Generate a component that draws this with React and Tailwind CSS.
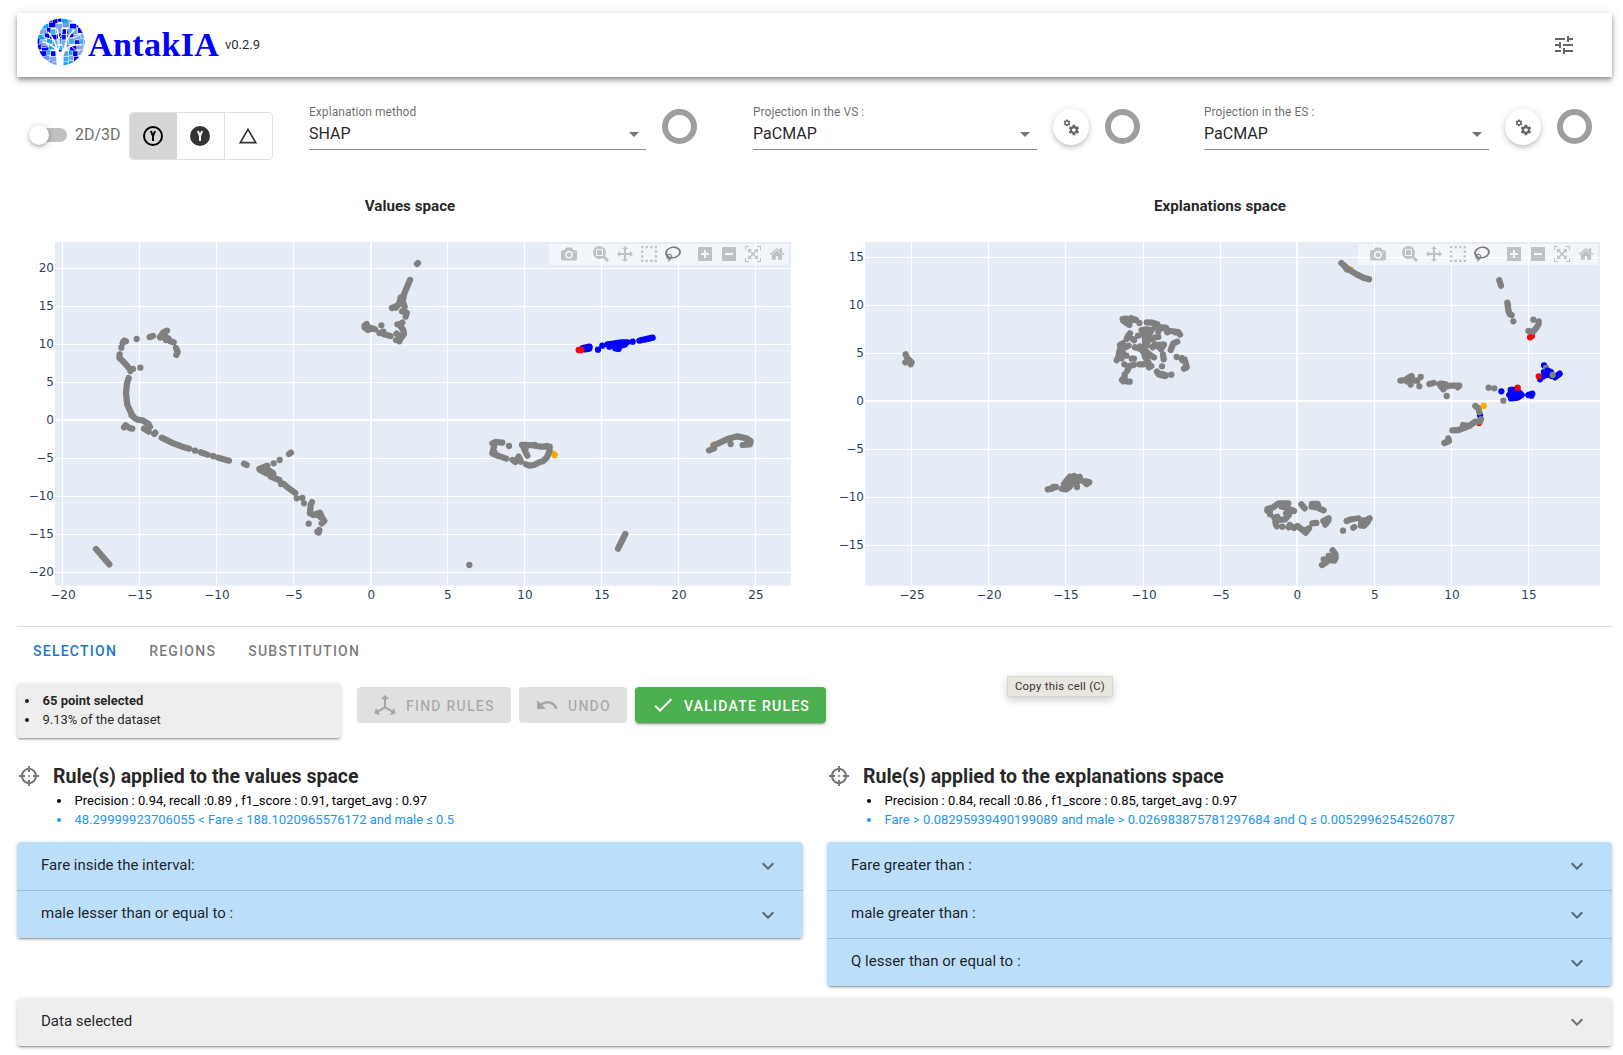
import React from "react";

const MDI = {
  tune: "M3,17V19H9V17H3M3,5V7H13V5H3M13,21V19H21V17H13V15H11V21H13M7,9V11H3V13H7V15H9V9H7M21,13V11H11V13H21M15,9H17V7H21V5H17V3H15V9Z",
  triangle: "M12,2L1,21H23M12,6L19.53,19H4.47",
  menuDown: "M7,10L12,15L17,10H7Z",
  chevron: "M7.41,8.58L12,13.17L16.59,8.58L18,10L12,16L6,10L7.41,8.58Z",
  check: "M21,7L9,19L3.5,13.5L4.91,12.09L9,16.17L19.59,5.59L21,7Z",
  undo: "M12.5,8C9.85,8 7.45,9 5.6,10.6L2,7V16H11L7.38,12.38C8.77,11.22 10.54,10.5 12.5,10.5C16.04,10.5 19.08,12.81 20.14,16L22.5,15.22C21.11,11.03 17.15,8 12.5,8Z",
  axis: "M12,2L16,6H13V13.85L19.53,17.61L21,15.03L22.5,20.5L17,21.96L18.53,19.35L12,15.58L5.47,19.35L7,21.96L1.5,20.5L3,15.03L4.47,17.61L11,13.85V6H8L12,2Z",
  target:
    "M11,2V4.07C7.38,4.53 4.53,7.38 4.07,11H2V13H4.07C4.53,16.62 7.38,19.47 11,19.93V22H13V19.93C16.62,19.47 19.47,16.62 19.93,13H22V11H19.93C19.47,7.38 16.62,4.53 13,4.07V2M11,6.08V8H13V6.09C15.5,6.5 17.5,8.5 17.92,11H16V13H17.91C17.5,15.5 15.5,17.5 13,17.92V16H11V17.91C8.5,17.5 6.5,15.5 6.08,13H8V11H6.09C6.5,8.5 8.5,6.5 11,6.08M12,11A1,1 0 0,0 11,12A1,1 0 0,0 12,13A1,1 0 0,0 13,12A1,1 0 0,0 12,11Z",
  cogs: "M15.9,18.45C17.25,18.45 18.35,17.35 18.35,16C18.35,14.65 17.25,13.55 15.9,13.55C14.54,13.55 13.45,14.65 13.45,16C13.45,17.35 14.54,18.45 15.9,18.45M21.1,16.68L22.58,17.84C22.71,17.95 22.75,18.13 22.66,18.29L21.26,20.71C21.17,20.86 21,20.92 20.83,20.86L19.09,20.16C18.73,20.44 18.33,20.67 17.91,20.85L17.64,22.7C17.62,22.87 17.47,23 17.3,23H14.5C14.32,23 14.18,22.87 14.15,22.7L13.89,20.85C13.46,20.67 13.07,20.44 12.71,20.16L10.96,20.86C10.81,20.92 10.62,20.86 10.54,20.71L9.14,18.29C9.05,18.13 9.09,17.95 9.22,17.84L10.7,16.68L10.65,16L10.7,15.31L9.22,14.16C9.09,14.05 9.05,13.86 9.14,13.71L10.54,11.29C10.62,11.13 10.81,11.07 10.96,11.13L12.71,11.84C13.07,11.56 13.46,11.32 13.89,11.15L14.15,9.29C14.18,9.13 14.32,9 14.5,9H17.3C17.47,9 17.62,9.13 17.64,9.29L17.91,11.15C18.33,11.32 18.73,11.56 19.09,11.84L20.83,11.13C21,11.07 21.17,11.13 21.26,11.29L22.66,13.71C22.75,13.86 22.71,14.05 22.58,14.16L21.1,15.31L21.15,16L21.1,16.68M6.69,8.07C7.56,8.07 8.26,7.37 8.26,6.5C8.26,5.63 7.56,4.92 6.69,4.92C5.82,4.92 5.13,5.63 5.13,6.5C5.13,7.37 5.82,8.07 6.69,8.07M10.03,6.94L11,7.68C11.07,7.75 11.09,7.87 11.03,7.97L10.13,9.53C10.08,9.63 9.96,9.67 9.86,9.63L8.74,9.18L8,9.62L7.81,10.81C7.79,10.92 7.7,11 7.59,11H5.79C5.67,11 5.58,10.92 5.56,10.81L5.4,9.62L4.64,9.18L3.52,9.63C3.41,9.67 3.3,9.63 3.24,9.53L2.34,7.97C2.28,7.87 2.31,7.75 2.39,7.68L3.34,6.94L3.31,6.5L3.34,6.06L2.39,5.32C2.31,5.25 2.28,5.13 2.34,5.03L3.24,3.47C3.3,3.37 3.41,3.33 3.52,3.37L4.63,3.82L5.4,3.38L5.56,2.19C5.58,2.08 5.67,2 5.79,2H7.59C7.7,2 7.79,2.08 7.81,2.19L8,3.38L8.74,3.82L9.86,3.37C9.96,3.33 10.08,3.37 10.13,3.47L11.03,5.03C11.09,5.13 11.07,5.25 11,5.32L10.03,6.06L10.06,6.5L10.03,6.94Z",
};

// Toolbar glyphs: [width of the glyph box, path]; y axis points up.
const TOOLS = [
  [
    [1000, "m500 450c-83 0-150-67-150-150 0-83 67-150 150-150 83 0 150 67 150 150 0 83-67 150-150 150z m400 150h-120c-16 0-34 13-39 29l-31 93c-6 15-23 28-40 28h-340c-16 0-34-13-39-28l-31-94c-6-15-23-28-40-28h-120c-55 0-100-45-100-100v-450c0-55 45-100 100-100h800c55 0 100 45 100 100v450c0 55-45 100-100 100z m-400-550c-138 0-250 112-250 250 0 138 112 250 250 250 138 0 250-112 250-250 0-138-112-250-250-250z m365 380c-19 0-35 16-35 35 0 19 16 35 35 35 19 0 35-16 35-35 0-19-16-35-35-35z"],
  ],
  [
    [1000, "m1000-25l-250 251c40 63 63 138 63 218 0 224-182 406-407 406-224 0-406-182-406-406s183-406 407-406c80 0 155 22 218 62l250-250 125 125z m-812 250l0 438 437 0 0-438-437 0z m62 375l313 0 0-312-313 0 0 312z"],
    [1000, "m1000 350l-187 188 0-125-250 0 0 250 125 0-188 187-187-187 125 0 0-250-250 0 0 125-188-188 186-187 0 125 252 0 0-250-125 0 187-188 188 188-125 0 0 250 250 0 0-126 187 188z"],
    [1000, "m0 850l0-143 143 0 0 143-143 0z m286 0l0-143 143 0 0 143-143 0z m285 0l0-143 143 0 0 143-143 0z m286 0l0-143 143 0 0 143-143 0z m-857-286l0-143 143 0 0 143-143 0z m857 0l0-143 143 0 0 143-143 0z m-857-285l0-143 143 0 0 143-143 0z m857 0l0-143 143 0 0 143-143 0z m-857-286l0-143 143 0 0 143-143 0z m286 0l0-143 143 0 0 143-143 0z m285 0l0-143 143 0 0 143-143 0z m286 0l0-143 143 0 0 143-143 0z"],
    [1031, "m1018 538c-36 207-290 336-568 286-277-48-473-256-436-463 10-57 36-108 76-151-13-66 11-137 68-183 34-28 75-41 114-42l-55-70 0 0c-2-1-3-2-4-3-10-14-8-34 5-45 14-11 34-8 45 4 1 1 2 3 2 5l0 0 113 140c16 11 31 24 45 40 4 3 6 7 8 11 48-3 100 0 151 9 278 48 473 255 436 462z m-624-379c-80 14-149 48-197 96 42 42 109 47 156 9 33-26 47-66 41-105z m-187-74c-19 16-33 37-39 60 50-32 109-55 174-68-42-25-95-24-135 8z m360 75c-34-7-69-9-102-8 8 62-16 128-68 170-73 59-175 54-244-5-9 20-16 40-20 61-28 159 121 317 333 354s407-60 434-217c28-159-121-318-333-355z", true],
  ],
  [
    [875, "m1 787l0-875 875 0 0 875-875 0z m687-500l-187 0 0-187-125 0 0 187-188 0 0 125 188 0 0 187 125 0 0-187 187 0 0-125z"],
    [875, "m0 788l0-876 876 0 0 876-876 0z m688-500l-500 0 0 125 500 0 0-125z"],
    [1000, "m250 850l-187 0-63 0 0-62 0-188 63 0 0 188 187 0 0 62z m688 0l-188 0 0-62 188 0 0-188 62 0 0 188 0 62-62 0z m-875-938l0 188-63 0 0-188 0-62 63 0 187 0 0 62-187 0z m875 188l0-188-188 0 0-62 188 0 62 0 0 62 0 188-62 0z m-125 188l-1 0-93-94-156 156 156 156 92-93 2 0 0 250-250 0 0-2 93-92-156-156-156 156 94 92 0 2-250 0 0-250 0 0 93 93 157-156-157-156-93 94 0 0 0-250 250 0 0 0-94 93 156 157 156-157-93-93 0 0 250 0 0 250z"],
    [928.6, "m786 296v-267q0-15-11-26t-25-10h-214v214h-143v-214h-214q-15 0-25 10t-11 26v267q0 1 0 2t0 2l321 264 321-264q1-1 1-4z m124 39l-34-41q-5-5-12-6h-2q-7 0-12 3l-386 322-386-322q-7-4-13-4-7 2-12 7l-35 41q-4 5-3 13t6 12l401 334q18 15 42 15t43-15l136-114v109q0 8 5 13t13 5h107q8 0 13-5t5-13v-227l122-102q5-5 6-12t-4-13z"],
  ],
];

function Icon({ name, className = "size-6" }) {
  return (
    <svg viewBox="0 0 24 24" className={`shrink-0 ${className}`} fill="currentColor">
      <path d={MDI[name]} />
    </svg>
  );
}

function Modebar({ className }) {
  return (
    <div className={`absolute flex h-[21px] bg-white/50 ${className}`}>
      {TOOLS.map((group, g) => (
        <div key={g} className="flex pl-2">
          {group.map(([w, d, active], i) => (
            <div key={i} className="flex h-5 w-6 items-center justify-center">
              <svg
                viewBox={`0 0 ${w} 1000`}
                className={active ? "h-4 w-4 fill-[#444]/70" : "h-4 w-4 fill-[#444]/30"}
              >
                <path transform="matrix(1 0 0 -1 0 850)" d={d} />
              </svg>
            </div>
          ))}
        </div>
      ))}
    </div>
  );
}

// Each layer holds chains of neighbouring points, separated by ";".
const VALUES_LAYERS = [
  {
    origin: [0, 180],
    color: "gray",
    points:
      "370,485 378,484;368,490 373,482;364,503;410,477;449,471 459,468;480,472 490,457 501,452;487,462 496,468;480,470 505,475 510,484 521,487;498,480;528,504 533,516 529,525;359,523 358,533 372,547 390,568 399,567;391,573;421,563;386,594 381,610 378,640 382,675 394,700 402,713 412,719 427,721 445,731 450,740;394,705;372,742 377,736 388,744 397,746;432,746 446,755;463,762 466,758;485,773 520,790 547,800 568,806;585,812;602,817 622,824;638,828 641,829;655,833 687,842;732,851 740,855;778,867 802,857;821,850;839,840;867,822 873,818;780,870 800,880 820,882 812,890 838,900;785,864 800,868 818,878;800,875 815,890;843,912 850,911 860,920 886,939;890,955;907,954;912,970;936,966 932,975 930,1000 940,1005 960,998 965,1010 973,1023 965,1030;950,1003 962,1012;926,1031;958,1050 956,1058;952,1055;288,1107 328,1153",
  },
  { origin: [340, 180], color: "orange", points: "1122,793;638,820" },
  {
    origin: [340, 180],
    color: "gray",
    points:
      "231,252 234,249;210,300 195,335 185,360 168,383;156,384 170,378;192,345 188,365 194,380;182,352 178,372;186,394 200,398 197,410;200,400 192,392;187,428 180,433 172,433;182,440 190,450 192,462 180,478 168,480;152,468 132,463;118,459;105,448 80,440;74,437 80,432 84,450 74,443;80,440 92,447;124,436;130,455;170,461 182,470;178,484;457,790 468,786 487,788;507,798;462,800 457,820 476,828;464,818;488,832 499,836;518,840 526,846 536,830 543,845;558,853 568,857 582,855 600,846 608,844 620,833 628,815 629,800 605,800 590,798 570,795;584,795;620,798;546,795 558,795 552,805 556,815 562,827;550,800 558,803;1107,811 1122,805;1120,797 1140,788 1165,776 1192,769 1220,775 1232,783 1230,793 1208,795;1222,785;1172,792;856,1062 834,1106;388,1155",
  },
  {
    origin: [340, 180],
    color: "blue",
    points:
      "728,504 749,500 748,506 735,508;774,509;787,497;803,493 820,491 845,487 862,487;808,500;826,505 836,507;838,498 854,494;826,496;878,485;898,482 905,480;912,479 938,473",
  },
  { origin: [340, 180], color: "red", points: "716,510 724,510" },
  { origin: [340, 180], color: "orange", points: "644,825" },
];

const EXPLANATION_LAYERS = [
  { origin: [1220, 180], color: "orange", points: "391,268" },
  { origin: [1220, 180], color: "red", points: "936,467;777,729" },
  { origin: [1220, 180], color: "blue", points: "780,706" },
  {
    origin: [830, 230],
    color: "gray",
    points:
      "227,373 232,385 245,397 242,403;226,397 235,390;878,267 888,266;903,265 918,270;928,279;880,273 898,285;888,270 908,270;950,277 967,278 982,283 975,290;992,292 1008,293 1012,307;1000,294;1022,303 1045,306 1050,314;1036,307;935,300 950,298 965,300 958,312;985,305 988,294;900,310 894,318 890,327;908,327 912,331;924,317;940,310 945,325 945,350;950,310 952,345;965,328 975,322 985,321;870,345 878,340;896,347 885,352 870,356;868,365 865,382 860,391;876,345 878,365 875,385;872,350 870,380;889,377;915,352 935,358 945,375 960,375 972,382;968,352 975,343;985,345 1002,344 993,358;985,350;999,373 1001,388;1022,360 1030,340 1042,335;1040,381;1056,384 1066,395 1070,412 1062,416;1056,390 1064,388;883,403;897,408 912,405;928,403 940,403 955,397 945,380;948,385 955,370;905,386 912,386;957,412 964,408;996,409;981,425 987,434 1005,438;995,432 1008,436;1024,434;895,415 892,422;884,433 884,442 876,450;880,454;890,454 899,455;930,350 950,365;653,778 668,775;670,771 678,771;695,776 708,778 720,770;741,771;702,762 715,745 720,740;705,768 722,755;733,738 730,750 749,740 752,750 735,760 718,762 710,760 722,748;764,757;768,754 778,757 770,762",
  },
  {
    origin: [1220, 180],
    color: "gray",
    points:
      "364,249 385,268 410,283 430,293 447,298;372,256 380,268;838,301 843,317;862,368 865,390 869,403 875,405;864,375;880,424;940,419;956,424 956,432 948,445 938,457 925,453;541,602 555,600 575,588;568,596 570,606 572,614;562,604 580,602 592,602;602,591;598,619;628,612 641,609;658,612 665,622 680,620 678,613 663,611;670,628;693,617 718,617 713,622;680,648;806,623;823,625;850,662;766,678 775,685 778,697;783,718 780,725 765,725 748,738 729,735;740,741 715,750 697,751;729,741;685,775 687,783 673,789;142,992 142,987 160,982 176,970 205,970;150,1003;150,992;163,1013 172,1010 176,1020 195,1018 207,1005 203,990;185,980 200,982 210,988 222,993;198,1000;166,1025 168,1035 171,1039;187,1040;206,1042 209,1035 222,1044;232,1038 245,1048 257,1058 267,1045;258,1050;277,1030 289,1029;244,973 254,985;275,980 276,972 293,972 297,985 311,991;285,982;310,1023 326,1015 325,1022 316,1034;380,1023 392,1018 402,1017;415,1015;369,1052;400,1043 403,1041;423,1037 424,1022 440,1020 449,1015 441,1028 432,1037;338,1111 346,1122 347,1133 343,1142 325,1140;335,1132;326,1128;311,1138;306,1155 318,1148",
  },
  {
    origin: [1220, 180],
    color: "blue",
    points:
      "844,634;872,630 882,630 868,645 895,635 905,645 893,653 873,655 885,640;925,645 937,641;934,647;972,556;972,576 982,572 993,576 995,588;1019,581 1005,592;980,585;960,598;968,590",
  },
  { origin: [1220, 180], color: "gray", points: "978,564;998,585" },
  { origin: [1220, 180], color: "blue", points: "982,572" },
  { origin: [1220, 180], color: "red", points: "930,472;893,623;956,589" },
  { origin: [1220, 180], color: "orange", points: "791,678" },
];

function Points({ layer }) {
  const d = layer.points
    .split(";")
    .map((chain) => {
      const p = chain.trim().split(" ");
      return p.length === 1 ? `M${p[0]}h0.1` : `M${p.join("L")}`;
    })
    .join("");
  return (
    <path
      d={d}
      transform={`translate(${layer.origin[0]} ${layer.origin[1]}) scale(0.33333)`}
      fill="none"
      stroke={layer.color}
      strokeWidth="18.8"
      strokeLinecap="round"
      strokeLinejoin="round"
    />
  );
}

function Scatter({ box, area, xTicks, yTicks, layers }) {
  const [x0, y0, x1, y1] = area;
  return (
    <svg viewBox={box} className="block h-[380px] w-full">
      <rect x={x0} y={y0} width={x1 - x0} height={y1 - y0} fill="#e5ecf6" />
      <g stroke="#fff">
        {xTicks.map(([v, x]) => (
          <path key={v} d={`M${x} ${y0}V${y1}`} strokeWidth={v === 0 ? 2 : 1} />
        ))}
        {yTicks.map(([v, y]) => (
          <path key={v} d={`M${x0} ${y}H${x1}`} strokeWidth={v === 0 ? 2 : 1} />
        ))}
      </g>
      {layers.map((layer, i) => (
        <Points key={i} layer={layer} />
      ))}
      <g className="fill-[#2a3f5f] font-['DejaVu_Sans',sans-serif] text-[12px]">
        {xTicks.map(([v, x]) => (
          <text key={v} x={x + 0.4} y="599" textAnchor="middle">
            {String(v).replace("-", "−")}
          </text>
        ))}
        {yTicks.map(([v, y]) => (
          <text key={v} x={x0 - 1} y={y + 3.9} textAnchor="end">
            {String(v).replace("-", "−")}
          </text>
        ))}
      </g>
    </svg>
  );
}

const TILE_COLORS = ["#0000f5", "#12a5f4", "#0a14e8", "#6f9be8", "#0000ff", "#7fa6e6", "#35b5f5", "#0000e0"];

function Logo() {
  const tiles = [];
  for (let r = 0; r < 9; r++) {
    let x = -1 - ((r * 5) % 4);
    let c = 0;
    while (x < 48) {
      const w = 4 + ((r * 7 + c * 3 + r * c) % 4);
      tiles.push(
        <rect
          key={`${r}-${c}`}
          x={x}
          y={r * 5.5 - 1 + (c % 2) * 1.2}
          width={w - 0.5}
          height={4.9}
          fill={TILE_COLORS[(r * 3 + c * 5 + ((r * c) % 5)) % 8]}
        />
      );
      x += w;
      c += 1;
    }
  }
  return (
    <svg viewBox="0 0 48 48" className="size-12 shrink-0">
      <clipPath id="crown">
        <circle cx="24" cy="24" r="23.5" />
      </clipPath>
      <g clipPath="url(#crown)">
        {tiles}
        <g fill="none" stroke="#fff" strokeLinecap="round">
          <path d="M23 49V37" strokeWidth="7" />
          <path d="M22 40C21 36 20 33 19 30M24 40C25 36 27 33 28 30" strokeWidth="3" />
          <path d="M20 33C17 28 12 25 6 24M20 32C19 25 16 20 11 14M21 34C23 26 22 18 20 11M27 32C28 24 32 17 37 12M27 33C32 28 38 26 44 27M29 29C30 22 29 16 30 10" strokeWidth="1.4" />
          <path d="M15 27C11 29 8 30 4 29M17 22C13 21 9 20 6 18M22 20C25 17 26 13 25 10M32 20C36 20 40 19 43 17M34 28C37 31 40 33 43 33" strokeWidth="0.9" />
        </g>
      </g>
    </svg>
  );
}

function YCircle({ filled }) {
  return (
    <svg viewBox="0 0 24 24" className="size-6" fill="none">
      {filled ? (
        <circle cx="12" cy="12" r="10" fill="#333" />
      ) : (
        <circle cx="12" cy="12" r="9" stroke="#000" strokeWidth="2" />
      )}
      <path d="M9.9 7L12 12.2L14.1 7M12 11.5V17" stroke={filled ? "#fff" : "#000"} strokeWidth="2" />
    </svg>
  );
}

function Select({ label, value, className }) {
  return (
    <div className={`-mt-[9px] h-[50px] border-b border-[#8a8a8a] ${className}`}>
      <div className="pt-[3px] text-[12px] leading-[18px] tracking-[0.05px] text-black/60">{label}</div>
      <div className="mt-px flex h-6 items-center justify-between text-base text-black/87">
        <span>{value}</span>
        <Icon name="menuDown" className="size-6 text-black/54" />
      </div>
    </div>
  );
}

function Ring({ className }) {
  return <div className={`size-[35px] shrink-0 rounded-full border-6 border-[#9e9e9e] ${className}`} />;
}

function Fab({ className }) {
  return (
    <div
      className={`flex size-9 shrink-0 items-center justify-center rounded-full bg-white text-black/60 shadow-[0_3px_5px_-1px_rgba(0,0,0,0.2),0_1px_8px_0_rgba(0,0,0,0.14)] ${className}`}
    >
      <Icon name="cogs" className="size-[18px]" />
    </div>
  );
}

const RAISED = "shadow-[0_3px_1px_-2px_rgba(0,0,0,0.2),0_2px_2px_0_rgba(0,0,0,0.14),0_1px_5px_0_rgba(0,0,0,0.12)]";

function Bullet({ className = "", children }) {
  return (
    <li className={`flex items-center ${className}`}>
      <span className="mr-[13.5px] size-1 rounded-full bg-current" />
      {children}
    </li>
  );
}

function Panels({ items, className }) {
  return (
    <div className={`rounded ${RAISED} ${className}`}>
      {items.map((t, i) => (
        <div
          key={t}
          className={`flex h-12 items-center justify-between pr-[23px] pl-6 text-[15px] text-black/87 ${
            i > 0 ? "border-t border-black/15" : ""
          }`}
        >
          <span className="-mt-0.5">{t}</span>
          <Icon name="chevron" className="size-6 text-black/54" />
        </div>
      ))}
    </div>
  );
}

function RuleBlock({ title, score, rule, panels }) {
  return (
    <div>
      <div className="flex h-7 items-center">
        <Icon name="target" className="size-6 text-black/54" />
        <h2 className="mt-0.5 ml-3 text-[19.5px] font-bold text-black/87">{title}</h2>
      </div>
      <ul className="mt-[1px] pl-10 text-[13px] leading-[19px]">
        <Bullet className="text-black">{score}</Bullet>
        <Bullet className="text-[#2196f3]">{rule}</Bullet>
      </ul>
      <Panels items={panels} className="mt-[13px] bg-[#bbdefb]" />
    </div>
  );
}

function Button({ icon, label, className }) {
  return (
    <div className={`flex h-9 items-center rounded pl-4 text-sm font-medium tracking-[1.25px] ${className}`}>
      <Icon name={icon} />
      <span className="mt-px ml-[9px]">{label}</span>
    </div>
  );
}

const ticks = (from, positions) => positions.map((p, i) => [from + i * 5, p]);

export default function App() {
  return (
    <div className="relative flex h-[1055px] w-[1623px] flex-col overflow-hidden bg-white px-[17px] pt-[13px] font-[Roboto,sans-serif]">
      <header className="flex h-16 w-[1595px] shrink-0 items-center bg-white shadow-[0_2px_4px_-1px_rgba(0,0,0,0.3),0_4px_5px_0_rgba(0,0,0,0.2),0_1px_10px_0_rgba(0,0,0,0.14)]">
        <div className="-mt-1.5 ml-5">
          <Logo />
        </div>
        <span className="-mt-0.5 ml-[3px] w-[137px] font-['Palatino_Linotype','Liberation_Serif',serif] text-[34px] font-bold tracking-[0.4px] text-[#0000ff]">
          AntakIA
        </span>
        <span className="text-[13px] text-black/87">v0.2.9</span>
        <Icon name="tune" className="mr-9 ml-auto size-6 text-black/60" />
      </header>

      <div className="mt-8 flex h-[51px] shrink-0 items-start">
        <div className="mt-4 ml-3.5 flex h-5 w-[98px] items-center">
          <div className="flex h-3.5 w-9 items-center rounded-full bg-[#c1c1c1]">
            <div className="-ml-[2px] size-5 shrink-0 rounded-full bg-white shadow-[0_2px_4px_-1px_rgba(0,0,0,0.3),0_1px_6px_0_rgba(0,0,0,0.2)]" />
          </div>
          <span className="ml-2 text-base text-black/60">2D/3D</span>
        </div>
        <div className="mt-[3px] flex h-12 w-36 overflow-hidden rounded border border-[#e0e0e0]">
          <div className="flex w-[47px] items-center justify-center bg-[#d6d6d6] pr-0.5">
            <YCircle />
          </div>
          <div className="flex w-12 items-center justify-center border-r border-[#e0e0e0] pr-px">
            <YCircle filled />
          </div>
          <div className="flex flex-1 items-center justify-center pr-0.5 text-[#333]">
            <Icon name="triangle" className="size-5" />
          </div>
        </div>
        <Select label="Explanation method" value="SHAP" className="ml-9 w-[337px]" />
        <Ring className="ml-4" />
        <Select label="Projection in the VS :" value="PaCMAP" className="ml-14 w-[284px]" />
        <Fab className="ml-4" />
        <Ring className="ml-4" />
        <Select label="Projection in the ES :" value="PaCMAP" className="ml-16 w-[285px]" />
        <Fab className="ml-4" />
        <Ring className="ml-4" />
      </div>

      <div className="mt-[34px] grid shrink-0 grid-cols-[786px_786px] gap-6">
        <div className="relative">
          <h3 className="h-9 text-center text-[15.2px] leading-6 font-bold text-black/87">Values space</h3>
          <Scatter
            box="17 230 786 380"
            area={[55, 242, 791, 585.7]}
            xTicks={ticks(-20, [62.5, 139.5, 216.5, 293.5, 371, 447.5, 524.5, 601.5, 678.5, 755.5])}
            yTicks={ticks(-20, [572.5, 534.5, 496.5, 458.5, 420, 382.5, 344.5, 306.5, 268.5])}
            layers={VALUES_LAYERS}
          />
          <Modebar className="top-[50px] left-[532px]" />
        </div>
        <div className="relative">
          <h3 className="h-9 text-center text-[15.2px] leading-6 font-bold text-black/87">Explanations space</h3>
          <Scatter
            box="827 230 786 380"
            area={[865, 242, 1600, 585.7]}
            xTicks={ticks(-25, [911.5, 988.5, 1065.5, 1143.5, 1220.5, 1297, 1374.5, 1451.5, 1528.5])}
            yTicks={ticks(-15, [545.5, 497.5, 449.5, 401, 353.5, 305.5, 257.5])}
            layers={EXPLANATION_LAYERS}
          />
          <Modebar className="top-[50px] left-[531px]" />
        </div>
      </div>

      <div className="mt-4 flex h-[49px] w-[1595px] shrink-0 items-center gap-8 border-t border-[#dedede] px-4 text-sm font-medium tracking-[1.25px] text-black/54">
        <span className="text-[#1976d2]">SELECTION</span>
        <span>REGIONS</span>
        <span>SUBSTITUTION</span>
      </div>

      <div className="mt-2 flex h-[55px] shrink-0 items-start">
        <ul className={`h-[55px] w-[324px] rounded bg-[#eee] pt-2 pl-2 text-[13px] leading-[19px] text-black/87 ${RAISED}`}>
          <Bullet className="font-bold">65 point selected</Bullet>
          <Bullet>9.13% of the dataset</Bullet>
        </ul>
        <Button icon="axis" label="FIND RULES" className="mt-1 ml-4 w-[154px] bg-[#e0e0e0] text-black/26" />
        <Button icon="undo" label="UNDO" className="mt-1 ml-2 w-[108px] bg-[#e0e0e0] text-black/26" />
        <Button icon="check" label="VALIDATE RULES" className={`mt-1 ml-2 w-[191px] bg-[#4caf50] text-white ${RAISED}`} />
      </div>

      <div className="mt-6 grid h-[224px] shrink-0 grid-cols-[786px_785px] items-start gap-6">
        <RuleBlock
          title="Rule(s) applied to the values space"
          score="Precision : 0.94, recall :0.89 , f1_score : 0.91, target_avg : 0.97"
          rule="48.29999923706055 < Fare ≤ 188.1020965576172 and male ≤ 0.5"
          panels={["Fare inside the interval:", "male lesser than or equal to :"]}
        />
        <RuleBlock
          title="Rule(s) applied to the explanations space"
          score="Precision : 0.84, recall :0.86 , f1_score : 0.85, target_avg : 0.97"
          rule="Fare > 0.08295939490199089 and male > 0.026983875781297684 and Q ≤ 0.00529962545260787"
          panels={["Fare greater than :", "male greater than :", "Q lesser than or equal to :"]}
        />
      </div>

      <Panels items={["Data selected"]} className="mt-3 w-[1595px] shrink-0 bg-[#eee]" />

      <div className="absolute top-[676px] left-[1007px] flex h-[21px] w-[106px] items-center justify-center border border-[#d9d6cf] bg-[#e9e6df] pt-px text-[11.3px] tracking-[0.3px] text-[#333] shadow-[0_3px_8px_rgba(0,0,0,0.2)]">
        Copy this cell (C)
      </div>
    </div>
  );
}
